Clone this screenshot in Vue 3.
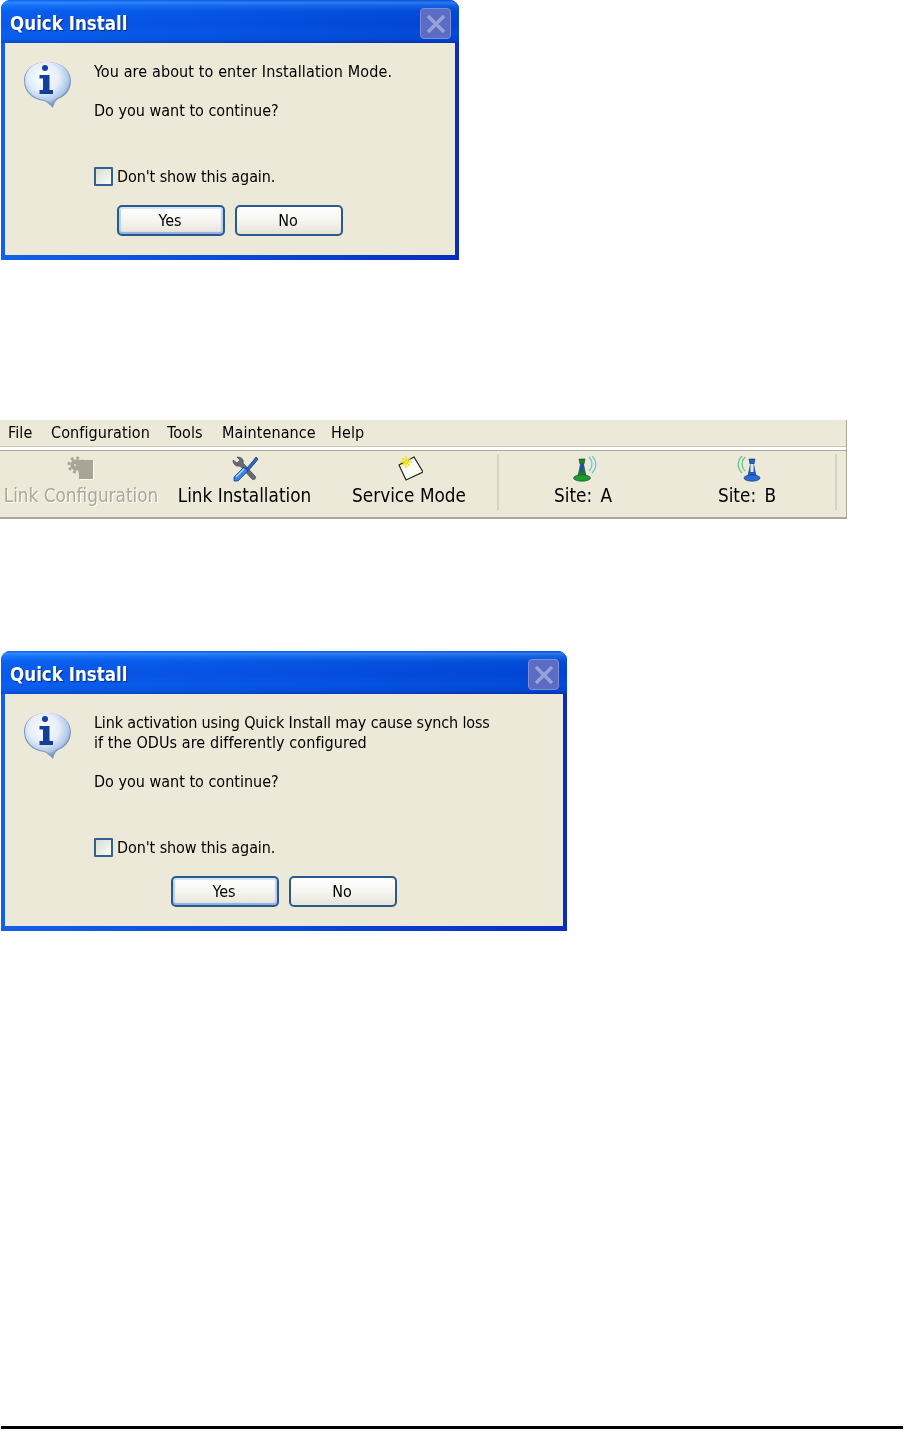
<script setup>
const dialogs = [
  { cls: 'd1', paras: [[{ t: 'You are about to enter Installation Mode.', ls: 0.12 }], [{ t: 'Do you want to continue?', ls: 0 }]] },
  { cls: 'd2', paras: [[{ t: 'Link activation using Quick Install may cause synch loss', ls: -0.145 }, { t: 'if the ODUs are differently configured', ls: 0.08 }], [{ t: 'Do you want to continue?', ls: 0 }]] },
]
const menus = [
  { t: 'File', w: 43 },
  { t: 'Configuration', w: 116 },
  { t: 'Tools', w: 55 },
  { t: 'Maintenance', w: 109 },
  { t: 'Help', w: 40 },
]
</script>

<template>
  <div class="page">
    <template v-for="(d, i) in dialogs" :key="d.cls">
      <section class="dialog" :class="d.cls">
        <header class="title">
          <span class="title-text">Quick Install</span>
          <span class="close">
            <svg width="20" height="20" viewBox="0 0 20 20"><path d="M2 2 L18 18 M18 2 L2 18" stroke="#98a3d8" stroke-width="3.400" fill="none"/></svg>
          </span>
        </header>
        <div class="body">
          <div class="msg-row">
            <svg class="info" width="50" height="50" viewBox="0 0 50 50">
              <defs>
                <radialGradient :id="'bub' + i" cx="0.42" cy="0.36" r="0.68">
                  <stop offset="0" stop-color="#ffffff"/>
                  <stop offset="0.5" stop-color="#e4edfa"/>
                  <stop offset="0.8" stop-color="#b0c8e8"/>
                  <stop offset="1" stop-color="#6486b4"/>
                </radialGradient>
              </defs>
              <path d="M24 2 C37 2 48 9 48 21 C48 31 41 37 35 39 C32 41 31 44 30 48 C27 45 24 42 21 41 C10 40 1 32 1 21 C1 9 11 2 24 2 Z" fill="#7d99bf"/>
              <path d="M24 2 C37 2 47 9 47 21 C47 30 40 36 34 38 C31 40 30 42 29.500 45 C27 43 24 41 21 40 C11 39 2 31 2 21 C2 9 11 2 24 2 Z" :fill="'url(#bub' + i + ')'"/>
              <circle cx="22" cy="8" r="3" fill="#123f9c"/>
              <path d="M16.500 15 H26.500 V30 H30 V34 H16.500 V30 H20 V18.500 H16.500 Z" fill="#123f9c"/>
            </svg>
            <div class="msg">
              <p v-for="(p, k) in d.paras" :key="k"><span v-for="l in p" :key="l.t" class="line" :style="{ letterSpacing: l.ls + 'px' }">{{ l.t }}</span></p>
            </div>
          </div>
          <label class="check"><span class="box"></span><span class="check-label">Don't show this again.</span></label>
          <div class="buttons">
            <button class="btn default">Yes</button>
            <button class="btn">No</button>
          </div>
        </div>
      </section>

      <div v-if="i === 0" class="app-bar">
        <nav class="menu"><span v-for="m in menus" :key="m.t" class="menu-item" :style="{ width: m.w + 'px' }">{{ m.t }}</span></nav>
        <div class="tools">
          <div class="tool off">
            <svg width="28" height="26" viewBox="0 0 28 26">
              <path d="M12 5 H27 V24 H13 Z" fill="#fff"/>
              <path d="M11 4 H26 V23 H12 Z" fill="#a8a596"/>
              <circle cx="9" cy="9" r="5.500" fill="#a8a596"/>
              <circle cx="9" cy="9" r="7" fill="none" stroke="#a8a596" stroke-width="3" stroke-dasharray="2.800 2.700"/>
              <circle cx="8" cy="9" r="1" fill="#ece9d8"/>
            </svg>
            <span>Link Configuration</span>
          </div>
          <div class="tool">
            <svg width="28" height="26" viewBox="0 0 28 26">
              <path d="M2 4 C2 8 5 11 9 10 L21 23 C23 25 26 22 24 20 L12 7 C13 4 11 1 6 1 L9 4 L6 7 Z" fill="#6a6a72" stroke="#36363e" stroke-width=".6"/>
              <path d="M3 21 L13 11 L17 15 L7 25 L3 25 Z" fill="#3b82e8" stroke="#143c90" stroke-width=".8"/>
              <path d="M5 21 L13 13" stroke="#a8dcff" stroke-width="1.500"/>
              <path d="M15 13 L22 5 L25 1 L27 3 L24 7 L17 15 Z" fill="#2f66c8" stroke="#143c90" stroke-width=".8"/>
            </svg>
            <span>Link Installation</span>
          </div>
          <div class="tool">
            <svg width="28" height="26" viewBox="0 0 28 26">
              <path d="M4 9 L19 1 L28 16 L11 24 Z" fill="#fbfbf5" stroke="#222" stroke-width="1.200"/>
              <path d="M11 0 V12 M5 6 H17 M7 2 L15 10 M15 2 L7 10" stroke="#f0e020" stroke-width="1.500"/>
            </svg>
            <span>Service Mode</span>
          </div>
          <i class="sep"></i>
          <div class="tool site">
            <svg width="28" height="26" viewBox="0 0 28 26">
              <path d="M20 1 C24 5 24 11 20 15 M23 0 C28 5 28 12 23 17" stroke="#58c8d4" stroke-width="1.200" fill="none"/>
              <path d="M10 3 H16 L15 8 H14.500 L17 20 H9 L11.500 8 H11 Z" fill="#1e7a38" stroke="#0e4a20" stroke-width=".6"/>
              <rect x="11.500" y="8" width="3" height="8" fill="#2848c0"/>
              <ellipse cx="13" cy="22" rx="8.500" ry="3.200" fill="#1e9a30" stroke="#0e4a20" stroke-width=".6"/>
            </svg>
            <span>Site: A</span>
          </div>
          <div class="tool site">
            <svg width="28" height="26" viewBox="0 0 28 26">
              <path d="M12 1 C8 5 8 11 12 15 M9 0 C4 5 4 12 9 17" stroke="#55c090" stroke-width="1.200" fill="none"/>
              <path d="M16 3 H22 L21 8 H20.500 L23 20 H15 L17.500 8 H17 Z" fill="#1f5fc8" stroke="#103070" stroke-width=".6"/>
              <rect x="17.500" y="8" width="3" height="8" fill="#ddeeff"/>
              <ellipse cx="19" cy="22" rx="8" ry="3.200" fill="#2a6ad8" stroke="#103070" stroke-width=".6"/>
            </svg>
            <span>Site: B</span>
          </div>
          <i class="sep last"></i>
        </div>
      </div>
    </template>
    <div class="rule"></div>
  </div>
</template>

<style>
html, body { margin: 0; background: #fff; }
</style>

<style scoped>
.page {
  height: 1445px;
  overflow: hidden;
  font-family: "DejaVu Sans", sans-serif;
  font-stretch: condensed;
  color: #000;
  background: #fff;
}
.dialog {
  margin-left: 1px;
  display: flex;
  flex-direction: column;
  border-radius: 9px 9px 0 0;
  overflow: hidden;
  background: linear-gradient(90deg, #1360e8 0%, #0a4ad8 50%, #0a2cc0 100%);
  filter: blur(0.35px);
}
.d1 { width: 458px; height: 260px; }
.d2 { width: 566px; height: 280px; margin-top: 132px; }
.title {
  height: 43px;
  flex: none;
  box-sizing: border-box;
  display: flex;
  align-items: center;
  justify-content: space-between;
  padding: 4px 8px 0 9px;
  background:
    linear-gradient(90deg, rgba(20,110,255,.35), rgba(0,30,170,.25)),
    linear-gradient(180deg, #0a5fe8 0%, #3f96ff 6%, #1a78f5 12%, #0358e6 26%, #0450e0 55%, #0458e8 78%, #0350d8 92%, #0338b0 100%);
}
.title-text {
  font-family: "DejaVu Sans", sans-serif;
  font-stretch: condensed;
  font-weight: 700;
  font-size: 18.600px;
  color: #fff;
  text-shadow: 1px 1px 1px #0a2a80;
}
.close {
  width: 31px;
  height: 31px;
  display: flex;
  align-items: center;
  justify-content: center;
  border-radius: 4px;
  background: #5a6cc4;
  border: 1px solid #7f8fd6;
  box-sizing: border-box;
}
.body {
  flex: 1;
  margin: 0 4px 5px 4px;
  background: #ece9d8;
  display: flex;
  flex-direction: column;
}
.msg-row {
  display: flex;
  padding: 17px 0 0 18px;
}
.info { flex: none; margin-right: 21px; }
.msg { font-size: 16px; line-height: 20px; padding-top: 2px; }
.msg p { margin: 0 0 19px; }
.line { display: block; white-space: nowrap; }
.check {
  display: flex;
  align-items: flex-start;
  margin: 27px 0 0 89px;
  font-size: 16px;
  line-height: 20px;
  height: 20px;
}
.check-label { letter-spacing: -0.09px; }
.box {
  width: 19px;
  height: 19px;
  flex: none;
  box-sizing: border-box;
  margin-right: 4px;
  border: 2px solid #33628f;
  border-radius: 1px;
  background: linear-gradient(135deg, #dcdcd4, #fbfbf8);
}
.buttons {
  display: flex;
  justify-content: center;
  gap: 10px;
  margin-top: 18px;
}
.btn {
  width: 108px;
  height: 31px;
  box-sizing: border-box;
  border: 2px solid #2a5a8c;
  border-radius: 5px;
  background: linear-gradient(180deg, #ffffff 0%, #f6f5f0 50%, #e6e3d8 100%);
  font: inherit;
  font-size: 16px;
  color: #000;
  padding: 0 2px 0 0;
}
.btn.default {
  box-shadow: inset 0 2px 1px #cfe4fb, inset 0 -2px 1px #8fb0e4, inset 2px 0 1px #b9d2f2, inset -2px 0 1px #b9d2f2;
}
.app-bar {
  margin-top: 160px;
  width: 847px;
  height: 99px;
  background: #ece9d8;
  box-sizing: border-box;
  border-right: 1px solid #aca899;
  border-bottom: 2px solid #a9a69a;
  filter: blur(0.35px);
}
.menu {
  height: 27px;
  box-sizing: content-box;
  display: flex;
  align-items: center;
  padding: 0 0 0 8px;
  font-size: 16px;
  letter-spacing: 0.1px;
  border-bottom: 3px solid #fff;
  box-shadow: inset 0 -1px 0 #c9c6b6, 0 1px 0 #aca899;
}
.menu-item { display: block; flex: none; margin-top: -2px; }
.tools {
  display: grid;
  grid-template-columns: 162px 165px 164px 14px 156px 172px 1px;
  height: 66px;
  padding-top: 3px;
}
.tool {
  display: flex;
  flex-direction: column;
  align-items: center;
  font-size: 18.800px;
  line-height: 24px;
  white-space: nowrap;
}
.tool svg { display: block; margin-top: 3px; margin-bottom: 2px; }
.tool.site { word-spacing: 3px; }
.tool.off { color: #aca899; text-shadow: 1px 1px 0 #fff; }
.sep {
  display: block;
  width: 2px;
  height: 56px;
  margin: 1px 0 0 6px;
  background: #d6d3c2;
}
.sep.last { margin-left: 2px; }
.rule {
  margin: 495px 0 0 1px;
  width: 902px;
  height: 3px;
  background: #000;
}
</style>
